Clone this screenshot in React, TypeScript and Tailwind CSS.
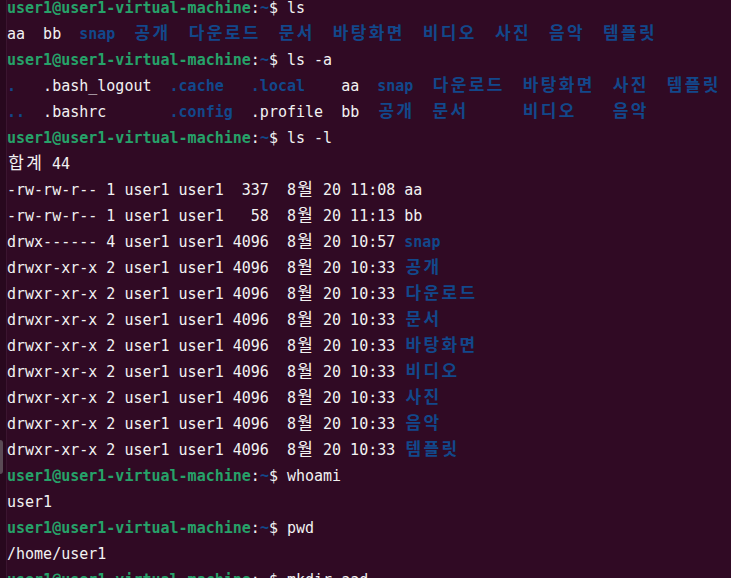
type Tone = "w" | "g" | "b";
type Seg = [string, Tone];

const tone: Record<Tone, string> = {
  w: "text-[#f2f2f2]",
  g: "text-[#26a269] font-bold",
  b: "text-[#12488b] font-bold",
};

const prompt = (cmd: string): Seg[] => [
  ["user1@user1-virtual-machine", "g"],
  [":", "w"],
  ["~", "b"],
  ["$ " + cmd, "w"],
];

const lsRow = (perm: string, n: string, size: string, time: string, name: string, t: Tone): Seg[] => [
  [`${perm} ${n} user1 user1 ${size}  8월 20 ${time} `, "w"],
  [name, t],
];

const lines: Seg[][] = [
  prompt("ls"),
  [
    ["aa  bb  ", "w"],
    ["snap", "b"],
    ["  ", "w"],
    ["공개  다운로드  문서  바탕화면  비디오  사진  음악  템플릿", "b"],
  ],
  prompt("ls -a"),
  [
    [".", "b"],
    ["   .bash_logout  ", "w"],
    [".cache", "b"],
    ["   ", "w"],
    [".local", "b"],
    ["    aa  ", "w"],
    ["snap", "b"],
    ["  ", "w"],
    ["다운로드  바탕화면  사진  템플릿", "b"],
  ],
  [
    ["..", "b"],
    ["  .bashrc       ", "w"],
    [".config", "b"],
    ["  .profile  bb  ", "w"],
    ["공개  문서      비디오    음악", "b"],
  ],
  prompt("ls -l"),
  [["합계 44", "w"]],
  lsRow("-rw-rw-r--", "1", " 337", "11:08", "aa", "w"),
  lsRow("-rw-rw-r--", "1", "  58", "11:13", "bb", "w"),
  lsRow("drwx------", "4", "4096", "10:57", "snap", "b"),
  lsRow("drwxr-xr-x", "2", "4096", "10:33", "공개", "b"),
  lsRow("drwxr-xr-x", "2", "4096", "10:33", "다운로드", "b"),
  lsRow("drwxr-xr-x", "2", "4096", "10:33", "문서", "b"),
  lsRow("drwxr-xr-x", "2", "4096", "10:33", "바탕화면", "b"),
  lsRow("drwxr-xr-x", "2", "4096", "10:33", "비디오", "b"),
  lsRow("drwxr-xr-x", "2", "4096", "10:33", "사진", "b"),
  lsRow("drwxr-xr-x", "2", "4096", "10:33", "음악", "b"),
  lsRow("drwxr-xr-x", "2", "4096", "10:33", "템플릿", "b"),
  prompt("whoami"),
  [["user1", "w"]],
  prompt("pwd"),
  [["/home/user1", "w"]],
  prompt("mkdir aad"),
];

// hangul takes two terminal cells, so each syllable gets a fixed 18px box
function Cells({ text }: { text: string }) {
  const out: React.ReactNode[] = [];
  let buf = "";
  text.split("").forEach((c, i) => {
    if (/[\uac00-\ud7a3]/.test(c)) {
      if (buf) out.push(buf);
      buf = "";
      out.push(
        <span key={i} className="inline-block w-[18px] text-center text-[17px] leading-none">
          {c}
        </span>
      );
    } else {
      buf += c;
    }
  });
  if (buf) out.push(buf);
  return <>{out}</>;
}

export default function App() {
  return (
    <div className="flex h-[578px] w-[731px] overflow-hidden bg-[#300a24]">
      <div className="relative w-[7px] shrink-0 border-r border-[#3b1530] bg-[#28081e]">
        <div className="absolute left-0 top-[440px] h-[34px] w-[3px] rounded-r-sm bg-[#5a4a55]" />
      </div>
      <div className="-mt-[5px] flex-1 whitespace-pre font-['DejaVu_Sans_Mono','Noto_Sans_CJK_KR',monospace] text-[15px] leading-[26px]">
        {lines.map((segs, i) => (
          <div key={i} className="h-[26px]">
            {segs.map(([t, k], j) => (
              <span key={j} className={tone[k]}>
                <Cells text={t} />
              </span>
            ))}
          </div>
        ))}
      </div>
    </div>
  );
}
